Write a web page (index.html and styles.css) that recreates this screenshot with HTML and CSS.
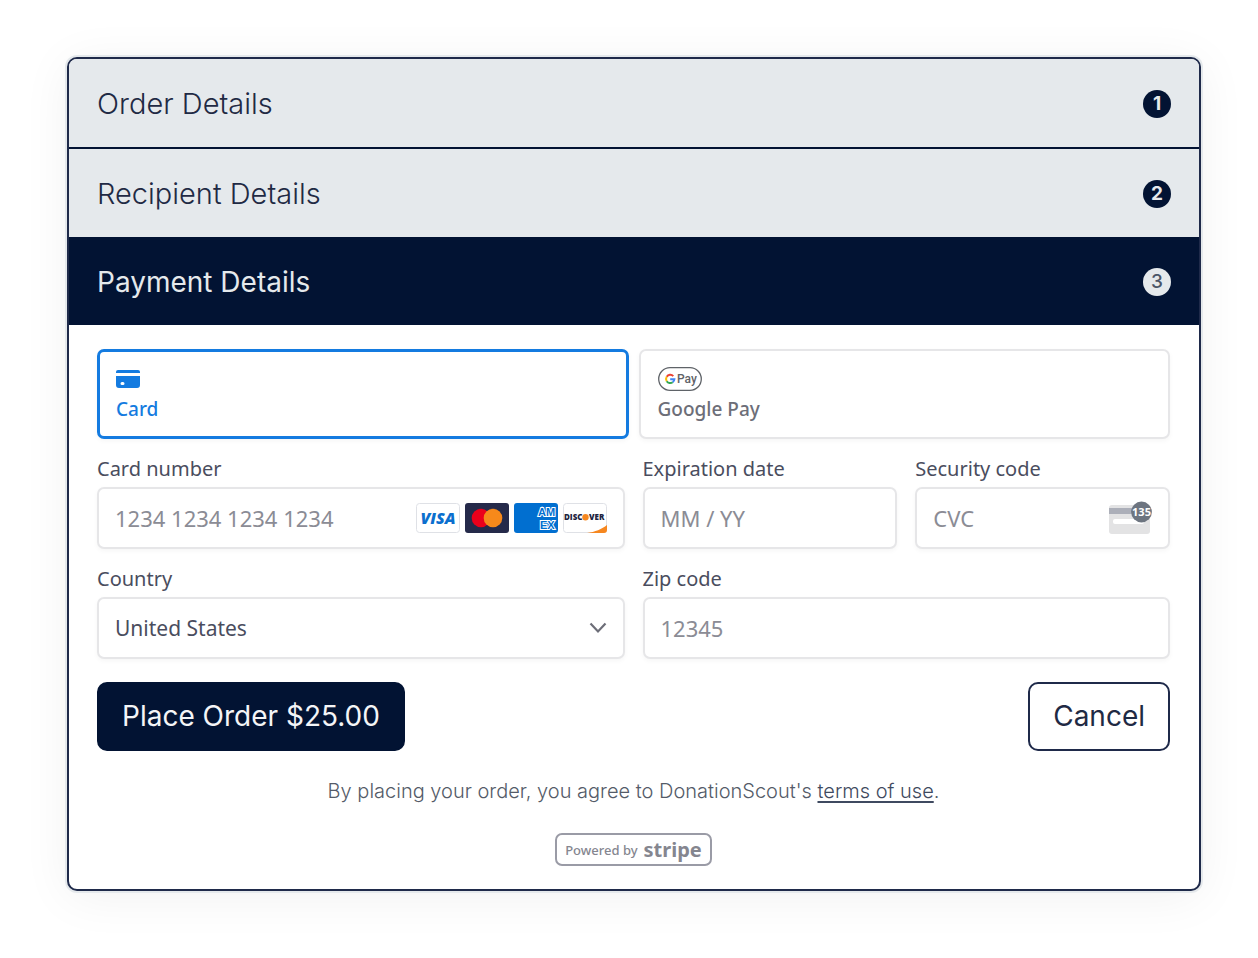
FILE: index.html
```html
<!DOCTYPE html>
<html lang="en">
<head>
  <meta charset="UTF-8" />
  <meta name="viewport" content="width=device-width, initial-scale=1" />
  <title>DonationScout | Checkout</title>
  <link rel="stylesheet" href="styles.css">
</head>
<body>

  <main class="checkout">
    <h2 class="step"><button type="button" class="step-toggle">Order Details <span class="step-number">1</span></button></h2>
    <h2 class="step"><button type="button" class="step-toggle">Recipient Details <span class="step-number">2</span></button></h2>
    <h2 class="step active"><button type="button" class="step-toggle" aria-expanded="true">Payment Details <span class="step-number">3</span></button></h2>

    <form class="payment">
      <div class="methods">
        <button type="button" class="method selected" aria-pressed="true">
          <svg class="method-icon" width="24" height="24" viewBox="0 0 24 24" aria-hidden="true">
            <path d="M0 6V5a2 2 0 0 1 2-2h20a2 2 0 0 1 2 2v1z" fill="#147be0"/>
            <path fill-rule="evenodd" d="M0 9h24v9a3 3 0 0 1-3 3H3a3 3 0 0 1-3-3zM6 15a1.500 1.500 0 1 0 0 3h1a1.500 1.500 0 1 0 0-3z" fill="#147be0"/>
          </svg>
          Card
        </button>
        <button type="button" class="method" aria-pressed="false">
          <svg class="method-icon" width="44" height="24" viewBox="0 0 44 24" aria-hidden="true">
            <rect x="0.700" y="0.700" width="42.600" height="22.600" rx="11.300" fill="#fff" stroke="#5f6368" stroke-width="1.300"/>
            <g fill="none" stroke-width="2">
              <path d="M15.300 9.100A4.200 4.200 0 0 0 8.700 9.800" stroke="#ea4335"/>
              <path d="M8.700 9.800a4.200 4.200 0 0 0 0 4.400" stroke="#fbbc04"/>
              <path d="M8.700 14.200a4.200 4.200 0 0 0 6 1" stroke="#34a853"/>
              <path d="M14.700 15.200a4.200 4.200 0 0 0 1.700-3h-4.200" stroke="#4285f4"/>
            </g>
            <text x="19" y="16" class="gpay-text">Pay</text>
          </svg>
          Google Pay
        </button>
      </div>

      <div class="fields">
        <div class="field wide">
          <label for="cardNumber">Card number</label>
          <div class="control">
            <input type="text" id="cardNumber" placeholder="1234 1234 1234 1234" inputmode="numeric" />
            <div class="brands">
              <svg width="44" height="30" viewBox="0 0 44 30" role="img" aria-label="Visa">
                <rect x="0.500" y="0.500" width="43" height="29" rx="3" fill="#fff" stroke="#dfe1e6"/>
                <text x="22" y="21" text-anchor="middle" class="visa-text">VISA</text>
              </svg>
              <svg width="44" height="30" viewBox="0 0 44 30" role="img" aria-label="Mastercard">
                <rect width="44" height="30" rx="3" fill="#252a4a"/>
                <circle cx="16" cy="15" r="9.300" fill="#eb001b"/>
                <circle cx="28" cy="15" r="9.300" fill="#f7891b"/>
              </svg>
              <svg width="44" height="30" viewBox="0 0 44 30" role="img" aria-label="American Express">
                <rect width="44" height="30" rx="3" fill="#016fd0"/>
                <text x="24" y="13" class="amex-text">AM</text>
                <text x="26" y="26" class="amex-text">EX</text>
              </svg>
              <svg width="44" height="30" viewBox="0 0 44 30" role="img" aria-label="Discover">
                <rect x="0.500" y="0.500" width="43" height="29" rx="3" fill="#fff" stroke="#dfe1e6"/>
                <path d="M24 30c8-1 15-4 20-8v5a3 3 0 0 1-3 3z" fill="#f6871f"/>
                <text x="1" y="17" class="discover-text">DISC</text>
                <circle cx="22.500" cy="14.300" r="3.200" fill="#f6871f"/>
                <text x="26" y="17" class="discover-text">VER</text>
              </svg>
            </div>
          </div>
        </div>

        <div class="field">
          <label for="expiry">Expiration date</label>
          <div class="control">
            <input type="text" id="expiry" placeholder="MM / YY" />
          </div>
        </div>

        <div class="field">
          <label for="cvc">Security code</label>
          <div class="control">
            <input type="text" id="cvc" placeholder="CVC" />
            <svg width="43" height="34" viewBox="0 0 43 34" aria-hidden="true">
              <rect y="4" width="41" height="29" rx="3" fill="#e3e3e4"/>
              <path d="M0 7h41v6H0z" fill="#acafb9"/>
              <rect x="4" y="18" width="31" height="5" rx="2" fill="#fff"/>
              <circle cx="32.500" cy="11" r="10.400" fill="#6d7580"/>
              <text x="32.500" y="15" text-anchor="middle" class="cvc-text">135</text>
            </svg>
          </div>
        </div>

        <div class="field wide">
          <label for="country">Country</label>
          <div class="control">
            <select id="country">
              <option>United States</option>
            </select>
            <svg class="chevron" width="18" height="12" viewBox="0 0 18 12" aria-hidden="true">
              <path d="M1.500 1.500L9 9.500l7.500-8" fill="none" stroke="#6d6e78" stroke-width="2.200"/>
            </svg>
          </div>
        </div>

        <div class="field wide">
          <label for="zip">Zip code</label>
          <div class="control">
            <input type="text" id="zip" placeholder="12345" />
          </div>
        </div>
      </div>

      <div class="actions">
        <button type="submit" class="btn btn-primary">Place Order $25.00</button>
        <button type="button" class="btn">Cancel</button>
      </div>

      <p class="terms">By placing your order, you agree to DonationScout's <a href="#">terms of use</a>.</p>

      <a href="#" class="powered">Powered by <strong>stripe</strong></a>
    </form>
  </main>

</body>
</html>
```

FILE: styles.css
```css
* {
  box-sizing: border-box;
}

body {
  font-family: Inter, sans-serif;
  margin: 0;
  padding: 57px 57px 67px 67px;
  background-color: #fff;
  color: #1f2a44;
}

button, input, select {
  font: inherit;
  color: inherit;
}

button {
  cursor: pointer;
}

.checkout {
  border: 2px solid #1f2a4a;
  border-radius: 10px;
  background-color: #fff;
  overflow: hidden;
  box-shadow: 0 0 0 2px #e5e9ec, 0 6px 50px rgba(0, 0, 0, 0.06);
}

/* accordion headings */
.step {
  margin: 0;
  font-size: 29px;
  font-weight: 300;
  line-height: 34px;
  background-color: #e5e9ec;
}

.step + .step {
  border-top: 2px solid #021333;
}

.step-toggle {
  display: flex;
  justify-content: space-between;
  align-items: center;
  width: 100%;
  padding: 28px 28px 26px;
  border: none;
  background: none;
  text-align: left;
}

.step-number {
  width: 28px;
  height: 28px;
  border-radius: 50%;
  background-color: #021333;
  color: #e5e9ec;
  font-size: 19px;
  font-weight: 700;
  line-height: 28px;
  text-align: center;
}

.step + .step.active {
  border-top: none;
  background-color: #021333;
  color: #e5e9ec;
  font-size: 28px;
  font-weight: 400;
}

.active .step-number {
  background-color: #e5e9ec;
  color: #4b5568;
  font-weight: 500;
}

/* payment form */
.payment {
  display: flex;
  flex-direction: column;
  padding: 24px 29px 23px 28px;
  font-family: "Noto Sans", sans-serif;
}

.methods {
  display: grid;
  grid-template-columns: 1fr 1fr;
  gap: 10px;
}

.method, .control {
  border: 2px solid #e6e6e8;
  border-radius: 7px;
  background-color: #fff;
  box-shadow: 0 2px 5px rgba(0, 0, 0, 0.04);
}

.method {
  display: flex;
  flex-direction: column;
  align-items: flex-start;
  gap: 4px;
  height: 90px;
  padding: 16px 17px 8px;
  color: #6d6e78;
  font-size: 19px;
  font-weight: 500;
  line-height: 28px;
}

.method.selected {
  border: 3px solid #147be0;
  padding: 15px 16px 8px;
  color: #147be0;
}

.gpay-text {
  font-family: Roboto, sans-serif;
  font-size: 12px;
  font-weight: 500;
  fill: #5f6368;
}

.fields {
  display: grid;
  grid-template-columns: repeat(4, 1fr);
  gap: 18px;
  margin-top: 18px;
}

.field {
  min-width: 0;
}

.wide {
  grid-column: span 2;
}

.field label {
  display: block;
  margin-bottom: 6px;
  font-size: 20px;
  line-height: 24px;
  color: #4a4d5e;
}

.control {
  display: flex;
  align-items: center;
  height: 62px;
  padding: 0 16px;
}

.control input, .control select {
  flex: 1;
  min-width: 0;
  width: 100%;
  height: 100%;
  padding: 0;
  border: none;
  background: none;
  outline: none;
  font-size: 22px;
  color: #4a4d5e;
}

.control input::placeholder {
  color: #8b8c95;
  opacity: 1;
}

.control select {
  appearance: none;
  font-size: 21px;
}

.brands {
  display: flex;
  gap: 5px;
}

.visa-text {
  font-family: "Open Sans", sans-serif;
  font-size: 16px;
  font-weight: 800;
  font-style: italic;
  fill: #0b6fce;
}

.amex-text {
  font-family: "Liberation Sans", sans-serif;
  font-size: 11px;
  font-weight: 700;
  fill: #016fd0;
  stroke: #fff;
  stroke-width: 2px;
  paint-order: stroke;
}

.discover-text {
  font-family: "Open Sans", sans-serif;
  font-size: 8px;
  font-weight: 800;
  fill: #1d2340;
}

.cvc-text {
  font-family: "Open Sans", sans-serif;
  font-size: 11px;
  font-weight: 700;
  fill: #fff;
}

.chevron {
  pointer-events: none;
}

.actions {
  display: flex;
  justify-content: space-between;
  margin-top: 23px;
}

.btn {
  padding: 15px 23px;
  border: 2px solid #1f2a4a;
  border-radius: 10px;
  background-color: #fff;
  font-family: Inter, sans-serif;
  font-size: 28px;
  line-height: 35px;
}

.btn-primary {
  background-color: #021333;
  border-color: #021333;
  color: #f4f5f7;
}

.terms {
  margin: 27px 0 29px;
  font-family: Inter, sans-serif;
  font-size: 20px;
  font-weight: 300;
  line-height: 26px;
  text-align: center;
  color: #545b68;
}

.terms a {
  color: #3f4a60;
  text-underline-offset: 3px;
}

.powered {
  display: flex;
  align-items: center;
  align-self: center;
  gap: 6px;
  height: 33px;
  padding: 0 8px;
  border: 2px solid #9a9ba6;
  border-radius: 7px;
  color: #85868f;
  font-size: 13px;
  font-weight: 500;
  text-decoration: none;
}

.powered strong {
  font-size: 20px;
  line-height: 24px;
}
```
